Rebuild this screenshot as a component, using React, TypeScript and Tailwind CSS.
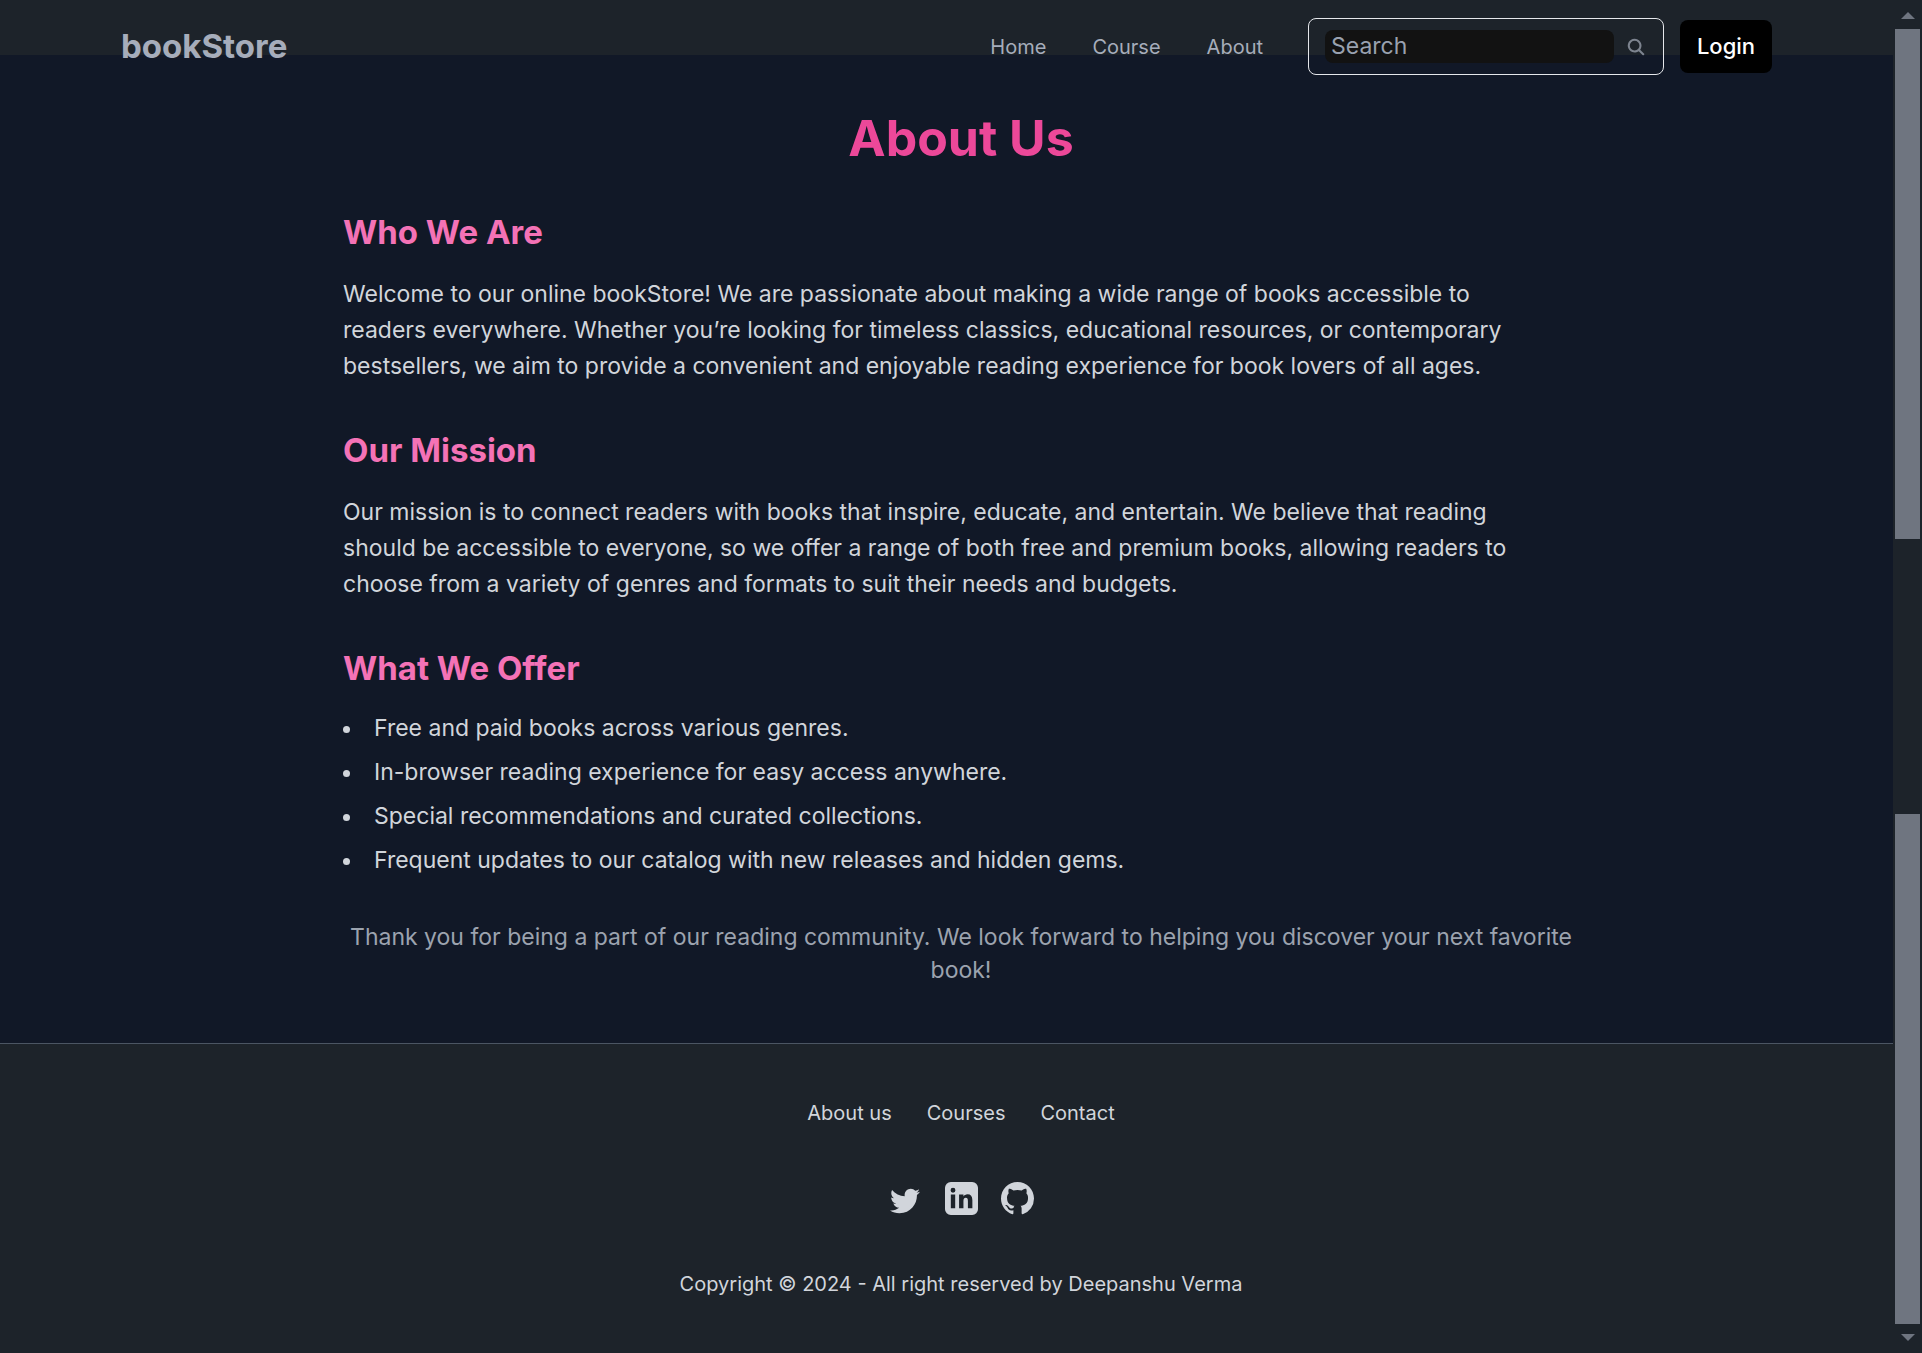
import React from "react";
import { FaTwitter } from "react-icons/fa";
import { BsGithub } from "react-icons/bs";

const navLinks = ["Home", "Course", "About"];
const footerLinks = ["About us", "Courses", "Contact"];
const offers = [
  "Free and paid books across various genres.",
  "In-browser reading experience for easy access anywhere.",
  "Special recommendations and curated collections.",
  "Frequent updates to our catalog with new releases and hidden gems.",
];

function Header() {
  return (
    <header className="absolute inset-x-0 top-0 mr-[29px] flex items-center px-[121px] pt-[18px] text-[#a6adbb]">
      <a href="#" className="text-[33px] leading-[57px] font-bold">bookStore</a>
      <nav className="mr-[45px] ml-auto flex gap-[46px] text-[20px]">
        {navLinks.map((l) => (
          <a key={l} href="#">{l}</a>
        ))}
      </nav>
      <label className="flex h-[57px] w-[356px] items-center gap-[11px] rounded-lg border border-gray-200 px-4">
        <input
          type="search"
          aria-label="Search"
          placeholder="Search"
          className="h-[33px] min-w-0 flex-1 rounded-lg bg-[#121212] px-[6px] text-[23px] outline-none placeholder:text-gray-400 placeholder:opacity-100"
        />
        <svg viewBox="0 0 16 16" className="size-[22px] fill-current opacity-70" aria-hidden="true">
          <path
            fillRule="evenodd"
            d="M9.965 11.026a5 5 0 1 1 1.06-1.06l2.755 2.754a.75.75 0 1 1-1.06 1.06l-2.755-2.754ZM10.5 7a3.5 3.5 0 1 1-7 0 3.5 3.5 0 0 1 7 0Z"
          />
        </svg>
      </label>
      <button className="ml-4 h-[53px] w-[92px] rounded-lg bg-black text-[22px] font-medium text-white">Login</button>
    </header>
  );
}

function Section({ title, children }: { title: string; children: React.ReactNode }) {
  return (
    <section className="mb-11">
      <h2 className="mb-[22px] text-[33px] leading-[44px] font-bold text-[#f472b6]">{title}</h2>
      {children}
    </section>
  );
}

function Footer() {
  return (
    <footer className="flex grow flex-col items-center border-t border-[#4b5563] pt-[55px] text-[#d1d5db]">
      <nav className="flex gap-[35px] text-[20px] leading-7">
        {footerLinks.map((l) => (
          <a key={l} href="#">{l}</a>
        ))}
      </nav>
      <div className="mt-[55px] flex gap-[23px]">
        <a href="#" aria-label="Twitter" className="flex size-[33px] items-center justify-center pt-1">
          <FaTwitter size={30} />
        </a>
        <a href="#" aria-label="LinkedIn">
          <svg viewBox="0 0 34 34" className="size-[33px] fill-current">
            <path
              fillRule="evenodd"
              d="M6 0h22a6 6 0 0 1 6 6v22a6 6 0 0 1-6 6H6a6 6 0 0 1-6-6V6a6 6 0 0 1 6-6ZM6 13v14h4.500V13ZM8.250 6a2.500 2.500 0 1 0 0 5 2.500 2.500 0 0 0 0-5ZM14.500 13v14H19v-7.500c0-2 .8-3.200 2.400-3.200s2.200 1.200 2.200 3.200V27h4.600v-8.300c0-4-1.800-6-4.900-6-2.100 0-3.500 1-4.300 2.300V13Z"
            />
          </svg>
        </a>
        <a href="#" aria-label="GitHub">
          <BsGithub size={33} />
        </a>
      </div>
      <p className="mt-[55px] text-[20px] leading-7">Copyright © 2024 - All right reserved by Deepanshu Verma</p>
    </footer>
  );
}

function Scrollbar() {
  return (
    <div aria-hidden="true" className="absolute inset-y-0 right-0 flex w-[29px] flex-col items-center bg-[#1d232a] py-3">
      <svg viewBox="0 0 14 7" className="h-[7px] w-[14px] fill-[#6f7580]"><path d="M7 0l7 7H0Z" /></svg>
      <div className="mt-[10px] h-[510px] w-[25px] bg-[#6f7580]" />
      <div className="mt-auto mb-[10px] h-[510px] w-[25px] bg-[#6f7580]" />
      <svg viewBox="0 0 14 7" className="h-[7px] w-[14px] fill-[#6f7580]"><path d="M0 0h14L7 7Z" /></svg>
    </div>
  );
}

export default function App() {
  return (
    <div className="relative flex min-h-screen flex-col bg-[#1d232a] pt-[55px] font-['Inter',sans-serif]">
      <main className="bg-[#111827] px-8 py-14 text-[23px] text-[#d1d5db]">
        <div className="mx-auto max-w-[1236px]">
          <h1 className="mb-11 text-center text-[50px] leading-[55px] font-bold text-[#ec4899]">About Us</h1>
          <Section title="Who We Are">
            <p className="max-w-[1200px] leading-[36px]">
              Welcome to our online bookStore! We are passionate about making a wide range of books accessible to
              readers everywhere. Whether you’re looking for timeless classics, educational resources, or contemporary
              bestsellers, we aim to provide a convenient and enjoyable reading experience for book lovers of all ages.
            </p>
          </Section>
          <Section title="Our Mission">
            <p className="max-w-[1200px] leading-[36px]">
              Our mission is to connect readers with books that inspire, educate, and entertain. We believe that reading
              should be accessible to everyone, so we offer a range of both free and premium books, allowing readers to
              choose from a variety of genres and formats to suit their needs and budgets.
            </p>
          </Section>
          <Section title="What We Offer">
            <ul className="list-inside list-disc space-y-[11px] leading-[33px]">
              {offers.map((o) => (
                <li key={o}>{o}</li>
              ))}
            </ul>
          </Section>
          <p className="text-center leading-[33px] text-[#9ca3af]">
            Thank you for being a part of our reading community. We look forward to helping you discover your next
            favorite book!
          </p>
        </div>
      </main>
      <Footer />
      <Scrollbar />
      <Header />
    </div>
  );
}
